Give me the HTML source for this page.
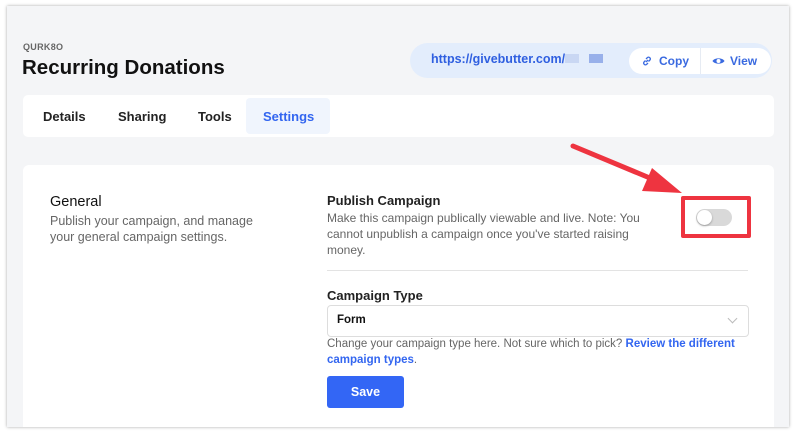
<!DOCTYPE html><html><head><style>
body{margin:0;width:800px;height:439px;background:#fff;font-family:"Liberation Sans",sans-serif;position:relative;overflow:hidden}
.panel{position:absolute;left:7px;top:6px;width:782px;height:421px;background:#f4f5f7;box-shadow:0 0 3px rgba(0,0,0,.35);overflow:hidden}
.a{position:absolute}
</style></head><body>
<div class="panel">
<div class="a" style="left:16px;top:36px;font-size:9px;font-weight:bold;color:#666;letter-spacing:.3px">QURK8O</div>
<div class="a" style="left:15px;top:50px;font-size:20.5px;font-weight:bold;color:#111">Recurring Donations</div>
<div class="a" style="left:403px;top:37px;width:362px;height:35px;border-radius:18px;background:#e3edfc"></div>
<div class="a" style="left:424px;top:46px;font-size:12.5px;font-weight:bold;color:#2f5fe0">https://givebutter.com/<span style="display:inline-block;width:14px;height:9px;background:#c9d7f3"></span> <span style="display:inline-block;width:14px;height:9px;background:#98b0ea;margin-left:6px"></span></div>
<div class="a" style="left:622px;top:42px;width:142px;height:26px;border-radius:13px;background:#fff"></div>
<div class="a" style="left:693px;top:42px;width:1px;height:26px;background:#e6ebf3"></div>
<svg class="a" style="left:634px;top:49px" width="12" height="12" viewBox="0 0 12 12" fill="none" stroke="#3a6ae0" stroke-width="1.3"><path d="M5 7l2-2M4.5 5.5L3 7a1.8 1.8 0 002.5 2.5L7 8M7.5 6.5L9 5a1.8 1.8 0 00-2.5-2.5L5 4"/></svg>
<div class="a" style="left:652px;top:48px;font-size:12px;font-weight:bold;color:#3a6ae0">Copy</div>
<svg class="a" style="left:705px;top:50px" width="13" height="10" viewBox="0 0 13 10"><path d="M0.5 5C2.5 1.5 10.5 1.5 12.5 5C10.5 8.5 2.5 8.5 0.5 5Z" fill="#3a6ae0"/><circle cx="6.5" cy="5" r="2" fill="#fff"/></svg>
<div class="a" style="left:723px;top:48px;font-size:12px;font-weight:bold;color:#3a6ae0">View</div>
<div class="a" style="left:16px;top:89px;width:751px;height:42px;background:#fff;border-radius:5px"></div>
<div class="a" style="left:239px;top:92px;width:84px;height:36px;background:#f0f5fd;border-radius:4px"></div>
<div class="a" style="left:36px;top:103px;font-size:13px;font-weight:bold;color:#222">Details</div>
<div class="a" style="left:111px;top:103px;font-size:13px;font-weight:bold;color:#222">Sharing</div>
<div class="a" style="left:191px;top:103px;font-size:13px;font-weight:bold;color:#222">Tools</div>
<div class="a" style="left:256px;top:103px;font-size:13px;font-weight:bold;color:#3366f0">Settings</div>
<div class="a" style="left:16px;top:159px;width:751px;height:280px;background:#fff;border-radius:6px"></div>
<div class="a" style="left:43px;top:188px;font-size:14.5px;color:#111">General</div>
<div class="a" style="left:43px;top:207px;font-size:12.5px;color:#666;line-height:16px;width:220px">Publish your campaign, and manage your general campaign settings.</div>
<div class="a" style="left:320px;top:187px;font-size:13px;font-weight:bold;color:#222">Publish Campaign</div>
<div class="a" style="left:320px;top:204px;font-size:12px;color:#666;line-height:16px;width:325px">Make this campaign publically viewable and live. Note: You cannot unpublish a campaign once you've started raising money.</div>
<div class="a" style="left:320px;top:264px;width:421px;height:1px;background:#e3e3e3"></div>
<div class="a" style="left:320px;top:282px;font-size:13px;font-weight:bold;color:#222">Campaign Type</div>
<div class="a" style="left:320px;top:299px;width:420px;height:30px;border:1px solid #ddd;border-radius:4px"></div>
<div class="a" style="left:330px;top:308px;font-size:11.5px;font-weight:bold;color:#111">Form</div>
<div class="a" style="left:722px;top:309px;width:6px;height:6px;border-right:1px solid #bbb;border-bottom:1px solid #bbb;transform:rotate(45deg)"></div>
<div class="a" style="left:320px;top:331px;font-size:11.5px;color:#666;line-height:15.5px;width:430px">Change your campaign type here. Not sure which to pick? <b style="color:#3366f0">Review the different campaign types</b>.</div>
<div class="a" style="left:320px;top:370px;width:77px;height:32px;background:#3366f5;border-radius:3px;color:#fff;font-size:12.5px;font-weight:bold;text-align:center;line-height:32px">Save</div>
<div class="a" style="left:674px;top:190px;width:70px;height:42px;border:4px solid #ee3440;box-sizing:border-box;border-radius:2px"></div>
<div class="a" style="left:689px;top:203px;width:36px;height:17px;border-radius:9px;background:#d9d9d9"></div>
<div class="a" style="left:690px;top:204px;width:15px;height:15px;border-radius:50%;background:#fff;box-shadow:0 1px 2px rgba(0,0,0,.3)"></div>
<svg class="a" style="left:0;top:0" width="782" height="421"><line x1="566" y1="140" x2="650" y2="175" stroke="#ee3440" stroke-width="5" stroke-linecap="round"/><polygon points="675,187 645,162 635,185" fill="#ee3440"/></svg>
</div>
</body></html>
